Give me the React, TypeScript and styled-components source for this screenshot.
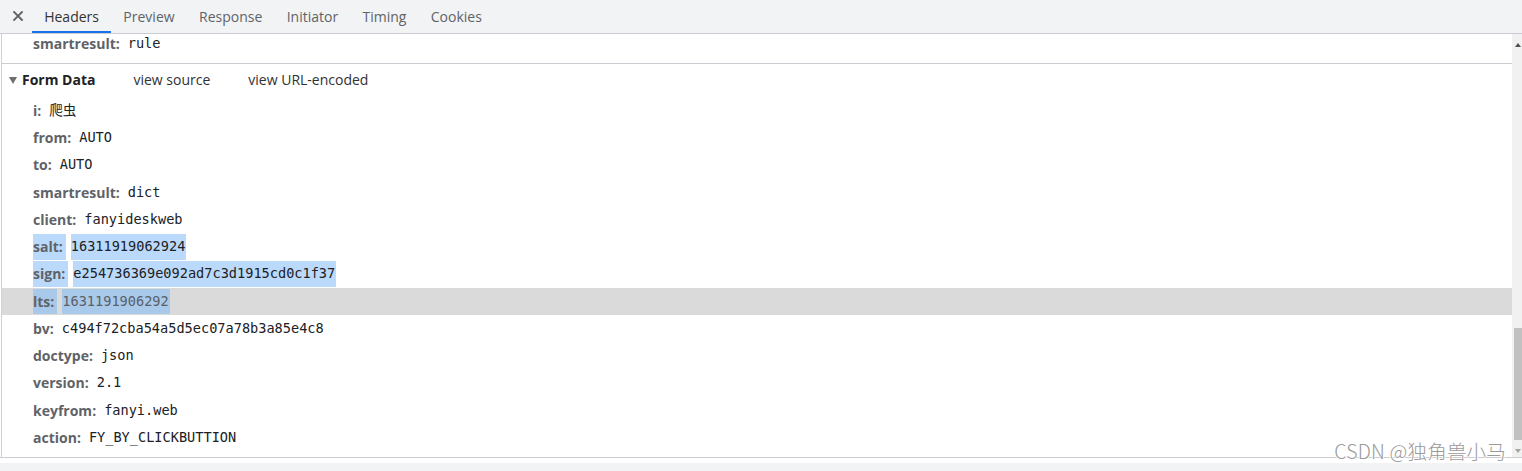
import React from "react";
import styled, { createGlobalStyle } from "styled-components";

const Global = createGlobalStyle`
  html, body { margin: 0; padding: 0; background: #ffffff; }
  body { font-family: "Open Sans", "Noto Sans", sans-serif; }
  * { box-sizing: border-box; }
`;

const Page = styled.div`
  position: relative;
  width: 1522px;
  height: 471px;
  display: flex;
  flex-direction: column;
  overflow: hidden;
  background: #ffffff;
`;

const TabBar = styled.div`
  height: 34px;
  flex: none;
  display: flex;
  align-items: stretch;
  background: #f1f3f4;
  border-bottom: 1px solid #cacdd1;
`;

const CloseBox = styled.div`
  width: 32px;
  display: flex;
  align-items: center;
  justify-content: center;
  padding-left: 4px;
  padding-bottom: 2px;
`;

const Tab = styled.div<{ $active?: boolean }>`
  padding: 2px 12.2px 0;
  display: flex;
  align-items: center;
  font-size: 14px;
  color: ${(p) => (p.$active ? "#333333" : "#5f6368")};
  border-bottom: 2px solid ${(p) => (p.$active ? "#1a73e8" : "transparent")};
`;

const Main = styled.div`
  flex: none;
  height: 424px;
  display: flex;
  border-bottom: 1px solid #cacdd1;
`;

const Content = styled.div`
  flex: 1;
  margin-left: 1px;
  border-left: 1px solid #cfd1d4;
  overflow: hidden;
`;

const Section = styled.div<{ $offset?: number; $bottom: number; $divider?: boolean }>`
  margin-top: ${(p) => p.$offset ?? 0}px;
  padding-bottom: ${(p) => p.$bottom}px;
  border-bottom: ${(p) => (p.$divider ? "1px solid #cacdd1" : "none")};
`;

const SectionHead = styled.div`
  height: 33px;
  padding-bottom: 1.5px;
  display: flex;
  align-items: center;
  padding-left: 7px;
  font-size: 14px;
  color: #202124;
`;

const Caret = styled.span`
  width: 0;
  height: 0;
  border-left: 4.5px solid transparent;
  border-right: 4.5px solid transparent;
  border-top: 7px solid #6e6e6e;
  margin-right: 5px;
  margin-top: 1px;
`;

const HeadTitle = styled.span`
  font-weight: 700;
`;

const HeadLink = styled.span`
  margin-left: 38px;
  color: #303134;
`;

const Row = styled.div<{ $hover?: boolean }>`
  height: 27.25px;
  display: flex;
  align-items: center;
  padding-left: 31px;
  background: ${(p) => (p.$hover ? "#dadada" : "transparent")};
  white-space: nowrap;
`;

const Name = styled.span<{ $sel?: string }>`
  height: 25.5px;
  line-height: 25.5px;
  padding-right: 3px;
  font-size: 14px;
  font-weight: 700;
  color: #5f6368;
  background: ${(p) =>
    p.$sel === "hover" ? "#a9c9ea" : p.$sel === "sel" ? "#bbdafb" : "transparent"};
`;

const Value = styled.span<{ $sel?: string }>`
  height: 25.5px;
  line-height: 25.5px;
  margin-left: 5px;
  padding-right: 1px;
  font-family: "DejaVu Sans Mono", "Noto Sans CJK SC", monospace;
  font-size: 13.6px;
  color: ${(p) => (p.$sel === "hover" ? "#5a6068" : "#202124")};
  background: ${(p) =>
    p.$sel === "hover" ? "#a9c9ea" : p.$sel === "sel" ? "#bbdafb" : "transparent"};
`;

const ScrollTrack = styled.div`
  width: 10px;
  flex: none;
  background: #f1f1f1;
  display: flex;
  flex-direction: column;
  align-items: flex-end;
`;

const ArrowUp = styled.span`
  margin-top: 9px;
  margin-right: 1px;
  width: 0;
  height: 0;
  border-left: 3.5px solid transparent;
  border-right: 3.5px solid transparent;
  border-bottom: 4px solid #505050;
`;

const Thumb = styled.span`
  margin-top: 281px;
  width: 8px;
  height: 112px;
  background: #c1c1c1;
`;

const ArrowDown = styled.span`
  margin-top: 9px;
  margin-right: 1px;
  width: 0;
  height: 0;
  border-left: 3.5px solid transparent;
  border-right: 3.5px solid transparent;
  border-top: 4px solid #a3a3a3;
`;

const Footer = styled.div`
  flex: 1;
  margin-top: 5px;
  background: #f1f3f4;
`;

const Watermark = styled.div`
  position: absolute;
  right: 16px;
  bottom: 6px;
  font-family: "Noto Sans CJK SC", "Noto Sans", sans-serif;
  font-size: 19.5px;
  font-weight: 300;
  color: #9a9a9a;
  letter-spacing: 0.2px;
  text-shadow: 1px 0 0 #fff, -1px 0 0 #fff, 0 1px 0 #fff, 0 -1px 0 #fff;
  white-space: nowrap;
`;

const CloseIcon = () => (
  <svg width="10" height="10" viewBox="0 0 10 10">
    <path d="M1 1 L9 9 M9 1 L1 9" stroke="#5f6368" strokeWidth="1.9" strokeLinecap="square" />
  </svg>
);

const tabs = ["Headers", "Preview", "Response", "Initiator", "Timing", "Cookies"];

type R = [string, string, string?];
const rows: R[] = [
  ["i", "爬虫"],
  ["from", "AUTO"],
  ["to", "AUTO"],
  ["smartresult", "dict"],
  ["client", "fanyideskweb"],
  ["salt", "16311919062924", "sel"],
  ["sign", "e254736369e092ad7c3d1915cd0c1f37", "sel"],
  ["lts", "1631191906292", "hover"],
  ["bv", "c494f72cba54a5d5ec07a78b3a85e4c8"],
  ["doctype", "json"],
  ["version", "2.1"],
  ["keyfrom", "fanyi.web"],
  ["action", "FY_BY_CLICKBUTTION"],
];

export default function App() {
  return (
    <Page>
      <Global />
      <TabBar>
        <CloseBox>
          <CloseIcon />
        </CloseBox>
        {tabs.map((t, i) => (
          <Tab key={t} $active={i === 0}>
            {t}
          </Tab>
        ))}
      </TabBar>
      <Main>
        <Content>
          <Section $offset={-3.6} $bottom={5.4} $divider>
            <Row>
              <Name>smartresult:</Name>
              <Value>rule</Value>
            </Row>
          </Section>
          <Section $bottom={0}>
            <SectionHead>
              <Caret />
              <HeadTitle>Form Data</HeadTitle>
              <HeadLink>view source</HeadLink>
              <HeadLink>view URL-encoded</HeadLink>
            </SectionHead>
            {rows.map(([k, v, s]) => (
              <Row key={k} $hover={s === "hover"}>
                <Name $sel={s}>{k}:</Name>
                <Value $sel={s}>{v}</Value>
              </Row>
            ))}
          </Section>
        </Content>
        <ScrollTrack>
          <ArrowUp />
          <Thumb />
          <ArrowDown />
        </ScrollTrack>
      </Main>
      <Footer />
      <Watermark>CSDN @独角兽小马</Watermark>
    </Page>
  );
}
